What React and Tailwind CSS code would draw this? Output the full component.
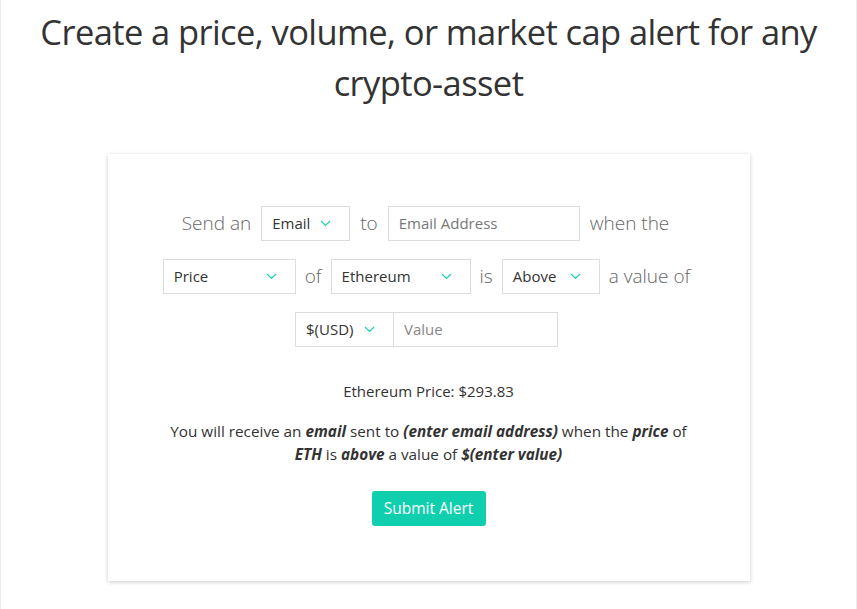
import React from "react";

function Chevron() {
  return (
    <svg width="11" height="7" viewBox="0 0 11 7" fill="none" className="shrink-0">
      <path d="M1 1l4.5 4.5L10 1" stroke="#1ccfb0" strokeWidth="1.2" />
    </svg>
  );
}

function Select({ label, w, cls = "" }) {
  return (
    <div
      className={`flex h-[35px] items-center justify-between border border-[#dcdcdc] bg-white pl-[10px] pr-[18px] text-[15px] text-[#333] ${cls}`}
      style={{ width: w }}
    >
      <span>{label}</span>
      <Chevron />
    </div>
  );
}

function Word({ children }) {
  return <span className="text-[19px] font-light text-[#666]">{children}</span>;
}

export default function App() {
  return (
    <div className="min-h-[609px] w-full border-x border-[#ececec] bg-white font-['Open_Sans',sans-serif] text-[#333]">
      <h1 className="mx-auto pt-[6px] text-center text-[34.5px] font-normal leading-[51px] tracking-[-0.6px] text-[#333] w-[820px]">
        Create a price, volume, or market cap alert for any crypto-asset
      </h1>
      <div className="mx-auto mt-[46px] h-[427px] w-[642px] bg-white shadow-[0_1px_4px_rgba(0,0,0,0.22)] pt-[52px]">
        <div className="flex flex-col items-center gap-[18px]">
          <div className="flex items-center gap-[10px] pr-[6px]">
            <Word>Send an</Word>
            <Select label="Email" w={89} cls="pr-[16px]" />
            <Word>to</Word>
            <div className="flex h-[35px] w-[192px] items-center border border-[#dcdcdc] pl-[10px] text-[15px] text-[#777]">
              Email Address
            </div>
            <Word>when the</Word>
          </div>
          <div className="flex items-center gap-[9px] pr-[4px]">
            <Select label="Price" w={133} />
            <Word>of</Word>
            <Select label="Ethereum" w={140} />
            <Word>is</Word>
            <Select label="Above" w={98} cls="pr-[14px]" />
            <Word>a value of</Word>
          </div>
          <div className="flex items-center pr-[4px]">
            <Select label="$(USD)" w={99} cls="pr-[14px]" />
            <div className="flex h-[35px] w-[164px] items-center border border-l-0 border-[#dcdcdc] pl-[10px] text-[15px] text-[#888]">
              Value
            </div>
          </div>
        </div>
        <p className="mt-[33px] text-center text-[15px] leading-[22px] text-[#333]">
          Ethereum Price: $293.83
        </p>
        <p className="mx-auto mt-[18px] w-[545px] text-center text-[15.3px] leading-[23px] text-[#333]">
          You will receive an <b className="italic">email</b> sent to{" "}
          <b className="italic">(enter email address)</b> when the <b className="italic">price</b> of{" "}
          <b className="italic">ETH</b> is <b className="italic">above</b> a value of{" "}
          <b className="italic">$(enter value)</b>
        </p>
        <div className="mt-[25px] flex justify-center">
          <button className="h-[35px] w-[114px] rounded-[3px] bg-[#0fcfae] text-[15.5px] text-white">
            Submit Alert
          </button>
        </div>
      </div>
    </div>
  );
}
